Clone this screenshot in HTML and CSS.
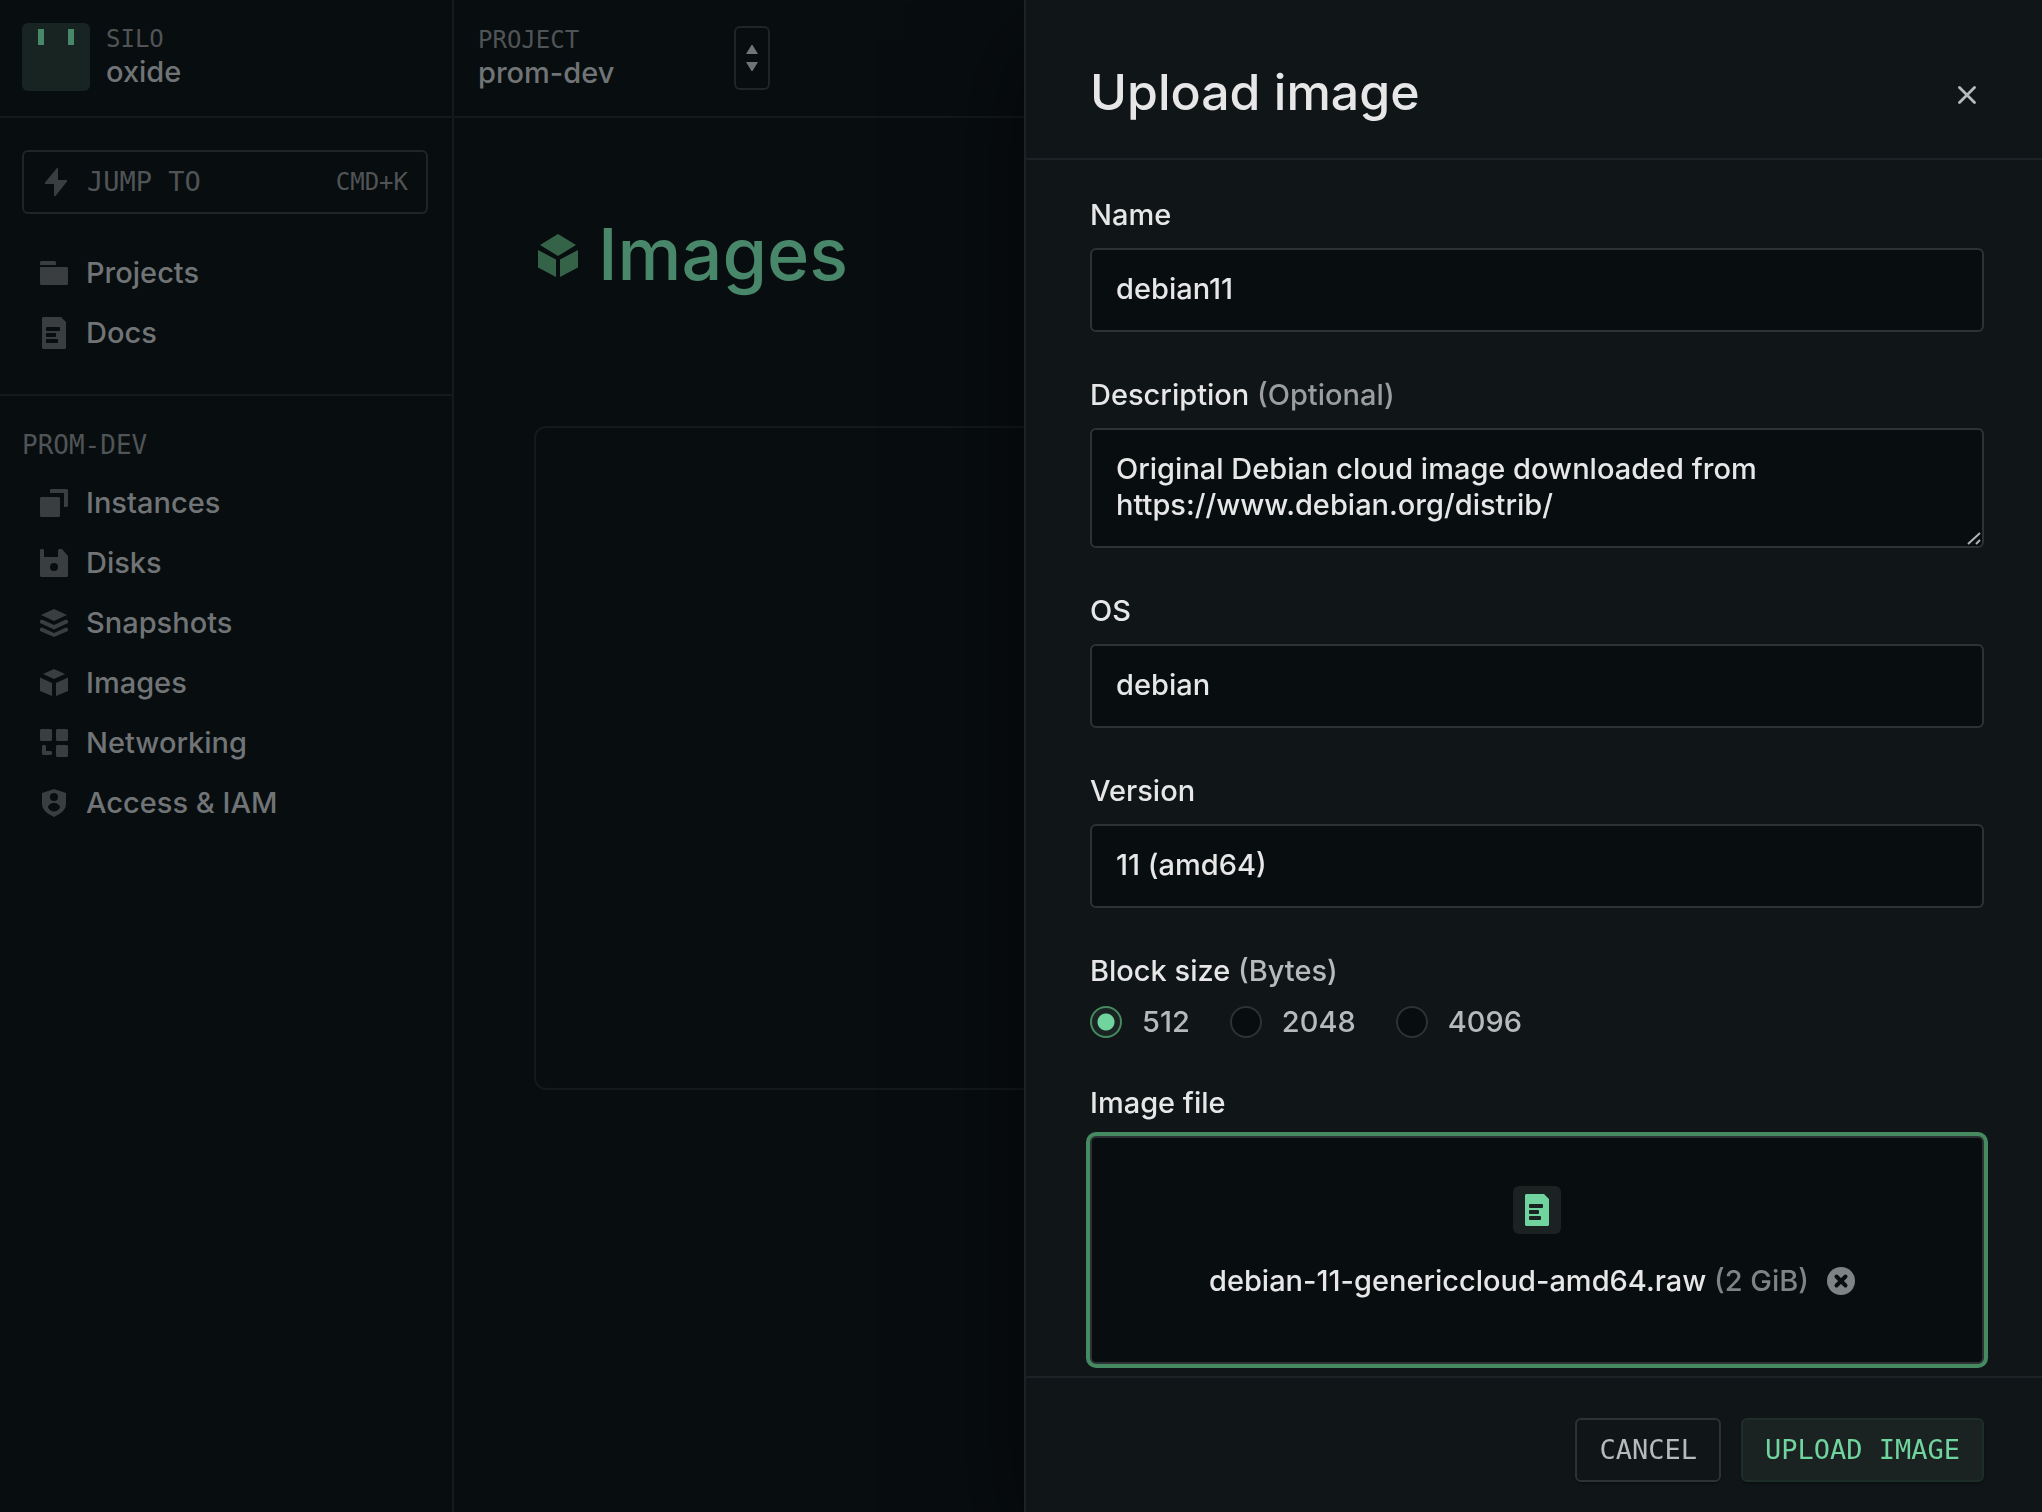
FILE: index.html
```html
<!DOCTYPE html>
<html lang="en">
<head>
<meta charset="utf-8">
<meta name="viewport" content="width=device-width, initial-scale=1">
<title>Upload image</title>
<link rel="stylesheet" href="styles.css">
</head>
<body>
<div class="app">
  <aside class="sidebar">
    <div class="silo">
      <svg class="silo-logo" viewBox="0 0 68 68" aria-hidden="true"><rect width="68" height="68" rx="6" fill="#172421"/><path d="M16 6h6v16h-6zM46 6h6v16h-6z" fill="#49876a"/></svg>
      <div class="switch-text">
        <div class="eyebrow">SILO</div>
        <div class="switch-name">oxide</div>
      </div>
    </div>
    <div class="nav-block">
      <button class="jump" type="button">
        <svg class="bolt" viewBox="0 0 22 28" aria-hidden="true"><path d="M12 0h1v12h9v1.500L10.500 28H9V16H0v-1.500z"/></svg>
        <span class="jump-label">JUMP TO</span>
        <span class="jump-key">CMD+K</span>
      </button>
      <nav class="nav">
        <a class="nav-link" href="#projects"><svg class="icon" viewBox="0 0 32 32"><path d="M3 4h14l1 1v3H2V5zM2 10h27l1 1v16l-1 1H3l-1-1z"/></svg>Projects</a>
        <a class="nav-link" href="#docs"><svg class="icon" viewBox="0 0 32 32"><path fill-rule="evenodd" d="M5 0h18l5 5v26l-1 1H5l-1-1V1zM9 10a1 1 0 0 0-1 1v2a1 1 0 0 0 1 1h12a1 1 0 0 0 1-1v-2a1 1 0 0 0-1-1zM9 16a1 1 0 0 0-1 1v2a1 1 0 0 0 1 1h8a1 1 0 0 0 1-1v-2a1 1 0 0 0-1-1zM9 22a1 1 0 0 0-1 1v2a1 1 0 0 0 1 1h10a1 1 0 0 0 1-1v-2a1 1 0 0 0-1-1z"/></svg>Docs</a>
      </nav>
    </div>
    <div class="nav-block nav-block-project">
      <h2 class="nav-title">PROM-DEV</h2>
      <nav class="nav">
        <a class="nav-link" href="#instances"><svg class="icon" viewBox="0 0 32 32"><path d="M3 10h18l1 1v18l-1 1H3l-1-1V11zM13 2h16l1 1v16l-1 1h-3V6H12V3z"/></svg>Instances</a>
        <a class="nav-link" href="#disks"><svg class="icon" viewBox="0 0 32 32"><path fill-rule="evenodd" d="M3 2h2l1 1v7h14V3l1-1h3l6 7v20l-1 1H3l-1-1V3zM16 16a4 4 0 1 0 0 8 4 4 0 0 0 0-8z"/></svg>Disks</a>
        <a class="nav-link" href="#snapshots"><svg class="icon" viewBox="0 0 32 32"><path d="M16 2l13 6-13 6L3 8zM4 12.500L16 18l12-5.500 2 1V16l-14 6.500L2 16v-2.500zM4 20.500L16 26l12-5.500 2 1V24l-14 6L2 24v-2.500z"/></svg>Snapshots</a>
        <a class="nav-link" href="#images"><svg class="icon" viewBox="0 0 32 32"><path d="M16 2l11 5-11 5L5 7zM2 10.500L14 16v13L2 24zM30 10.500L18 16v13l12-5z"/></svg>Images</a>
        <a class="nav-link" href="#networking"><svg class="icon" viewBox="0 0 32 32"><path d="M3 2h10l1 1v10l-1 1H3l-1-1V3zM19 2h10l1 1v10l-1 1H19l-1-1V3zM19 18h10l1 1v10l-1 1H19l-1-1V19zM5 18h2l1 1v5h5l1 1v2l-1 1H5l-1-1v-8z"/></svg>Networking</a>
        <a class="nav-link" href="#access"><svg class="icon" viewBox="0 0 32 32"><path fill-rule="evenodd" d="M16 2l12 4v11c0 6-6 10-12 13C10 27 4 23 4 17V6zM16 6a4 4 0 1 0 0 8 4 4 0 0 0 0-8zM16 16c-3 0-6 2-6 4.500 1 2.500 4 4 6 4s5-1.500 6-4c0-2.500-3-4.500-6-4.500z"/></svg>Access &amp; IAM</a>
      </nav>
    </div>
  </aside>
  <main class="main">
    <div class="topbar">
      <div class="switch-text">
        <div class="eyebrow">PROJECT</div>
        <div class="switch-name">prom-dev</div>
      </div>
      <button class="picker" type="button" aria-label="Switch project">
        <svg width="12" height="28" viewBox="0 0 12 28" aria-hidden="true"><path d="M5.500 1h1L12 10H0zM0 18h12L6.500 27h-1z"/></svg>
      </button>
    </div>
    <div class="content">
      <h1 class="page-title">
        <svg class="page-icon" viewBox="0 -4 48 48" aria-hidden="true"><path d="M24 0l18 11-18 11L6 11zM4 16l18 9.500V43L4 33.500zM44 16l-18 9.500V43l18-9.500z"/></svg>
        Images
      </h1>
      <div class="table-frame"></div>
    </div>
  </main>
</div>

<div class="panel" role="dialog" aria-labelledby="panel-title">
  <header class="panel-head">
    <h2 class="panel-title" id="panel-title">Upload image</h2>
    <button class="close" type="button" aria-label="Close">
      <svg width="18" height="18" viewBox="0 0 18 18" aria-hidden="true"><path d="M1.500 1.500l15 15M16.500 1.500l-15 15" stroke="#b9bbbc" stroke-width="2.800" stroke-linecap="round"/></svg>
    </button>
  </header>
  <form class="panel-body" id="upload-form">
    <div class="field">
      <label class="label" for="name">Name</label>
      <input class="input" id="name" type="text" value="debian11">
    </div>
    <div class="field">
      <label class="label" for="description">Description <span class="hint">(Optional)</span></label>
      <textarea class="input textarea" id="description" rows="2">Original Debian cloud image downloaded from https://www.debian.org/distrib/</textarea>
    </div>
    <div class="field">
      <label class="label" for="os">OS</label>
      <input class="input" id="os" type="text" value="debian">
    </div>
    <div class="field">
      <label class="label" for="version">Version</label>
      <input class="input" id="version" type="text" value="11 (amd64)">
    </div>
    <div class="field" role="radiogroup" aria-labelledby="block-size">
      <div class="label" id="block-size">Block size <span class="unit">(Bytes)</span></div>
      <div class="radios">
        <label class="radio"><input class="radio-input" type="radio" name="block" checked>512</label>
        <label class="radio"><input class="radio-input" type="radio" name="block">2048</label>
        <label class="radio"><input class="radio-input" type="radio" name="block">4096</label>
      </div>
    </div>
    <div class="field">
      <label class="label" for="file">Image file</label>
      <div class="dropzone">
        <input class="file-input" id="file" type="file">
        <span class="file-tile"><svg class="icon" viewBox="0 0 32 32" aria-hidden="true"><path fill-rule="evenodd" d="M5 0h18l5 5v26l-1 1H5l-1-1V1zM9 10a1 1 0 0 0-1 1v2a1 1 0 0 0 1 1h12a1 1 0 0 0 1-1v-2a1 1 0 0 0-1-1zM9 16a1 1 0 0 0-1 1v2a1 1 0 0 0 1 1h8a1 1 0 0 0 1-1v-2a1 1 0 0 0-1-1zM9 22a1 1 0 0 0-1 1v2a1 1 0 0 0 1 1h10a1 1 0 0 0 1-1v-2a1 1 0 0 0-1-1z"/></svg></span>
        <div class="file-row">
          <span>debian-11-genericcloud-amd64.raw <span class="file-size">(2 GiB)</span></span>
          <button class="clear" type="button" aria-label="Clear file">
            <svg width="28" height="28" viewBox="0 0 28 28" aria-hidden="true"><circle cx="14" cy="14" r="14" fill="#7e8385"/><path d="M9.500 9.500l9 9M18.500 9.500l-9 9" stroke="#080d0f" stroke-width="4" stroke-linecap="round"/></svg>
          </button>
        </div>
      </div>
    </div>
  </form>
  <footer class="panel-foot">
    <button class="btn" type="button">CANCEL</button>
    <button class="btn btn-primary" type="submit" form="upload-form">UPLOAD IMAGE</button>
  </footer>
</div>
</body>
</html>
```
FILE: styles.css
```css
:root {
  --bg: #080d0f;
  --raised: #101618;
  --line: #15191c;
  --line-raised: #1c2225;
  --stroke: #2d3335;
  --text: #e7e7e8;
  --text-dim: #717476;
  --text-faint: #505456;
  --icon-dim: #3a3e40;
  --green: #71d49e;
  --green-dim: #49876a;
  --sans: Inter, "Liberation Sans", sans-serif;
  --mono: "DejaVu Sans Mono", "Liberation Mono", monospace;
}

* {
  box-sizing: border-box;
}

body {
  margin: 0;
  background: var(--bg);
  color: var(--text);
  font: 500 29px/36px var(--sans);
  overflow: hidden;
}

button {
  margin: 0;
  padding: 0;
  border: 0;
  background: none;
  color: inherit;
  font: inherit;
  cursor: pointer;
}

h1,
h2 {
  margin: 0;
}

svg {
  display: block;
  flex: none;
}

/* Page behind the panel */
.app {
  display: grid;
  grid-template-columns: 454px 1fr;
  min-height: 100vh;
  color: var(--text-dim);
}

.sidebar {
  border-right: 2px solid var(--line);
}

.silo,
.topbar {
  display: flex;
  align-items: center;
  height: 118px;
  border-bottom: 2px solid var(--line);
}

.silo {
  gap: 16px;
  padding: 0 22px 2px;
}

.silo-logo {
  width: 68px;
  height: 68px;
}

.eyebrow {
  color: var(--text-faint);
  font: 24px/30px var(--mono);
}

.nav-block {
  padding: 32px 22px 30px;
}

.nav-block-project {
  border-top: 2px solid var(--line);
}

.jump {
  display: flex;
  align-items: center;
  width: calc(100% - 2px);
  height: 64px;
  margin-bottom: 29px;
  padding: 0 18px 0 21px;
  border: 2px solid #202527;
  border-radius: 6px;
  color: var(--text-faint);
  font: 27px/32px var(--mono);
  text-align: left;
}

.bolt {
  width: 22px;
  height: 28px;
  margin-right: 20px;
  fill: var(--icon-dim);
}

.jump-label {
  flex: 1;
}

.jump-key {
  font-size: 24px;
}

.nav-title {
  margin-bottom: 11px;
  color: var(--text-faint);
  font: 26px/34px var(--mono);
}

.nav-link {
  display: flex;
  align-items: center;
  gap: 16px;
  height: 60px;
  padding-left: 16px;
  color: inherit;
  text-decoration: none;
}

.nav-link:last-child {
  margin-bottom: 1px;
}

.icon {
  width: 32px;
  height: 32px;
  fill: var(--icon-dim);
}

.main {
  min-width: 0;
}

.topbar {
  padding-left: 24px;
}

.topbar .switch-text {
  width: 256px;
}

.picker {
  display: flex;
  align-items: center;
  justify-content: center;
  width: 36px;
  height: 64px;
  border: 2px solid #202527;
  border-radius: 6px;
  fill: var(--text-dim);
}

.content {
  padding: 96px 80px;
}

.page-title {
  display: flex;
  align-items: center;
  gap: 16px;
  margin-bottom: 132px;
  color: var(--green-dim);
  font: 500 72px/80px var(--sans);
}

.page-icon {
  width: 48px;
  height: 48px;
  fill: #356348;
}

.table-frame {
  min-height: 664px;
  border: 2px solid var(--line);
  border-radius: 12px;
}

/* Side panel */
.panel {
  position: fixed;
  top: 0;
  right: 0;
  bottom: 0;
  display: flex;
  flex-direction: column;
  width: 100%;
  max-width: 1018px;
  border-left: 2px solid var(--line-raised);
  background: var(--raised);
  box-shadow: 0 40px 100px rgba(0, 0, 0, 0.6);
}

.panel-head {
  display: flex;
  align-items: center;
  justify-content: space-between;
  padding: 60px 58px 34px 64px;
  border-bottom: 2px solid var(--line-raised);
}

.panel-title {
  font: 500 50px/64px var(--sans);
}

.close {
  display: grid;
  place-items: end center;
  width: 34px;
  height: 24px;
}

.panel-body {
  display: flex;
  flex: 1;
  flex-direction: column;
  gap: 45px;
  min-height: 0;
  padding: 37px 58px 12px 64px;
  overflow-y: auto;
  scrollbar-width: none;
}

.field {
  display: flex;
  flex: none;
  flex-direction: column;
  gap: 15px;
}

.hint {
  color: #9b9d9e;
}

.unit,
.radios {
  color: #b7b9ba;
}

.input {
  display: block;
  width: 100%;
  height: 84px;
  margin: 0;
  padding: 0 24px 3px;
  border: 2px solid var(--stroke);
  border-radius: 6px;
  outline: 0;
  background: var(--bg);
  color: inherit;
  font: inherit;
}

.textarea {
  height: 120px;
  padding: 21px 24px;
  overflow: hidden;
  resize: vertical;
}

.textarea::-webkit-resizer {
  background: url("data:image/svg+xml,%3Csvg xmlns='http://www.w3.org/2000/svg' width='15' height='15'%3E%3Cpath d='M1 13L13 2M9 13l4-4' stroke='%23b0b2b3' stroke-width='2'/%3E%3C/svg%3E") no-repeat right bottom;
}

.radios {
  display: flex;
  gap: 40px;
}

.radio {
  display: flex;
  align-items: center;
  gap: 20px;
}

.radio-input {
  width: 32px;
  height: 32px;
  margin: 0;
  border: 2px solid var(--stroke);
  border-radius: 50%;
  appearance: none;
  background: var(--bg);
}

.radio-input:checked {
  border-color: #458a61;
  background: radial-gradient(circle, var(--green) 0 8px, #1a2422 9px);
}

.dropzone {
  display: flex;
  flex-direction: column;
  align-items: center;
  gap: 29px;
  padding: 48px 24px 63px;
  border: 2px solid var(--stroke);
  border-radius: 6px;
  background: var(--bg);
  box-shadow: 0 0 0 4px #458a61;
}

.file-input {
  position: absolute;
  width: 1px;
  height: 1px;
  opacity: 0;
}

.file-tile {
  display: grid;
  place-items: center;
  width: 48px;
  height: 48px;
  border-radius: 6px;
  background: #1a2321;
}

.file-tile .icon {
  fill: var(--green);
}

.file-row {
  display: flex;
  align-items: center;
  gap: 8px;
}

.file-size {
  color: #7e8385;
}

.clear {
  display: grid;
  place-items: center;
  width: 48px;
  height: 36px;
}

.panel-foot {
  display: flex;
  justify-content: flex-end;
  gap: 20px;
  padding: 40px 58px 30px 64px;
  border-top: 2px solid var(--line-raised);
}

.btn {
  height: 64px;
  padding: 0 22px;
  border: 2px solid var(--stroke);
  border-radius: 6px;
  color: #b7b9ba;
  font: 27px/32px var(--mono);
  box-shadow: 0 2px 2px rgba(0, 0, 0, 0.3);
}

.btn-primary {
  border-color: #1d2e28;
  background: #1a2321;
  color: var(--green);
}
```
